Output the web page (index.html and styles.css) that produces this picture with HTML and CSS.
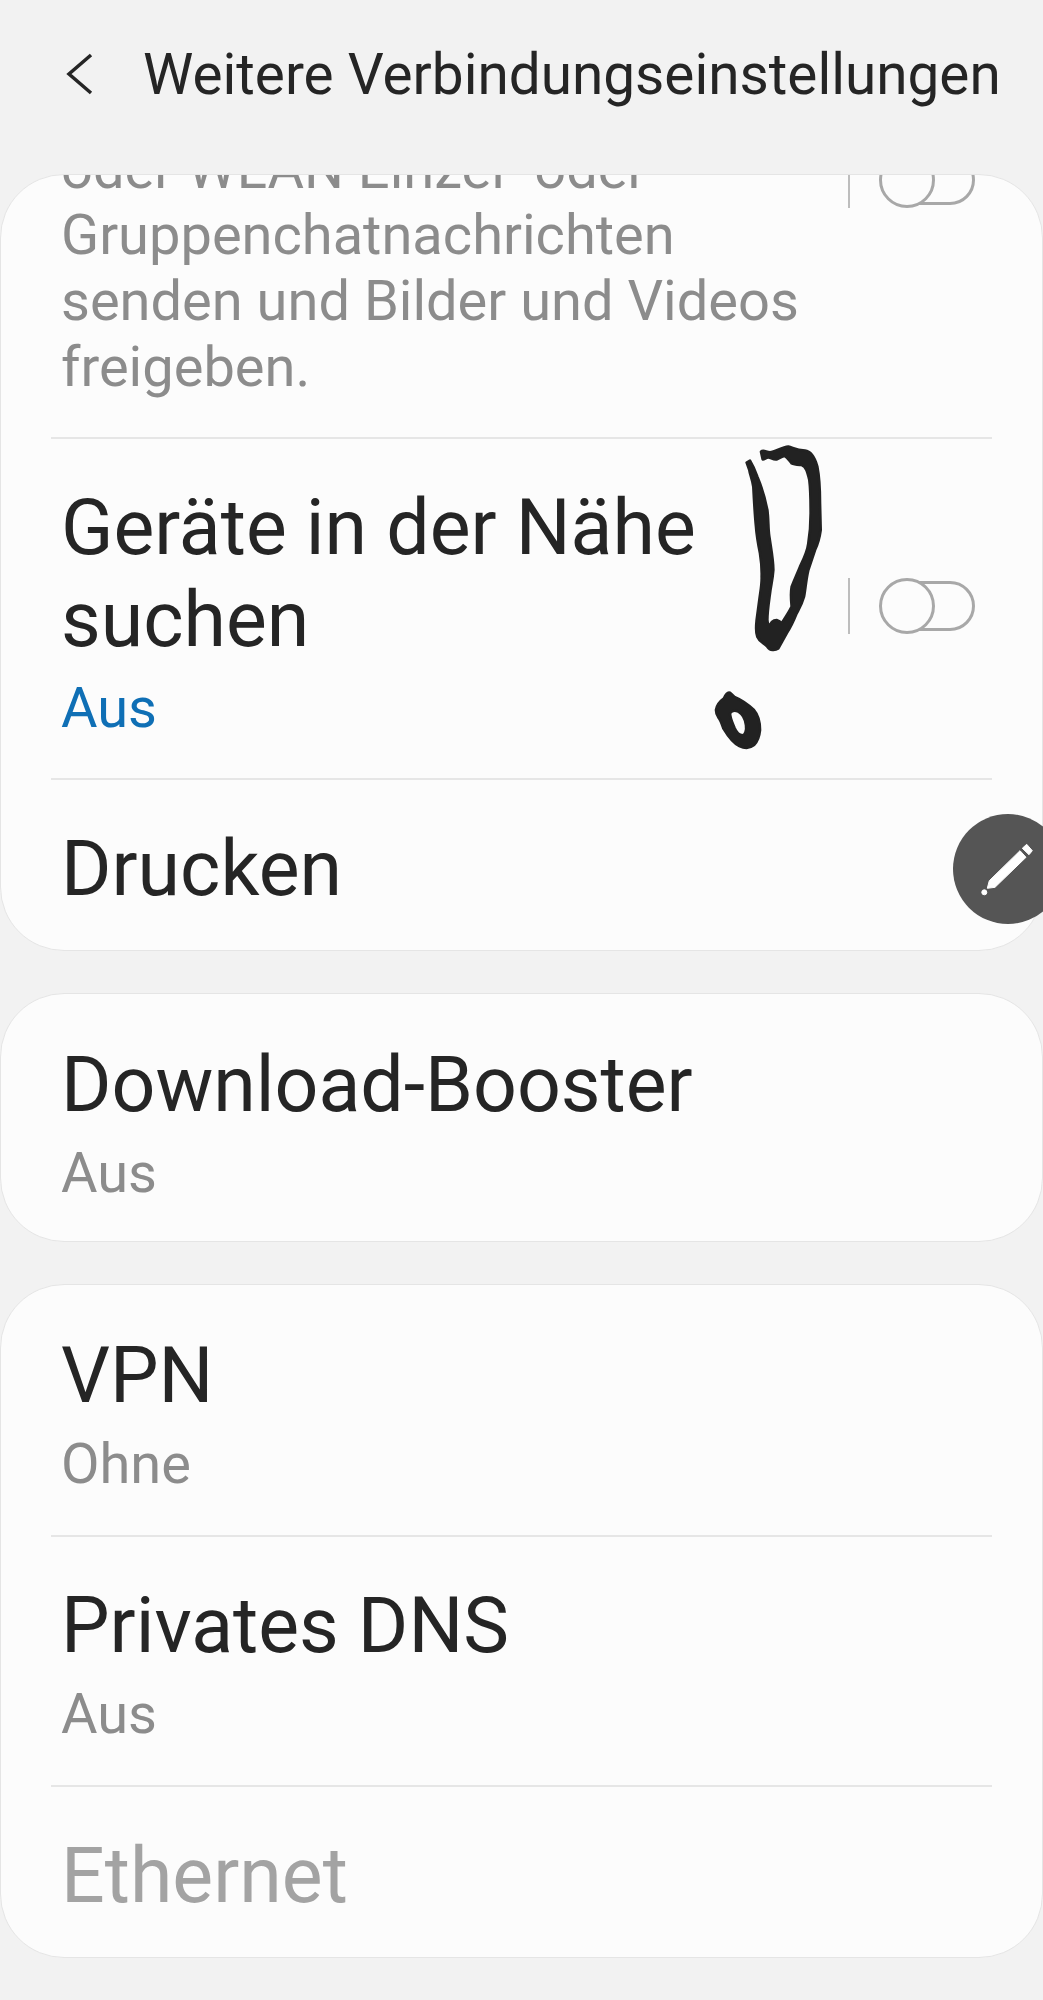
FILE: index.html
```html
<!DOCTYPE html>
<html lang="de">
<head>
  <meta charset="UTF-8" />
  <meta name="viewport" content="width=device-width, initial-scale=1.0"/>
  <title>Weitere Verbindungseinstellungen</title>
  <link rel="stylesheet" href="styles.css">
</head>
<body>
  <header class="topbar">
    <svg class="back" viewBox="0 0 30 42" aria-hidden="true"><path d="M26 2 L4 21 L26 40"/></svg>
    <h1>Weitere Verbindungseinstellungen</h1>
  </header>

  <main class="list">
    <section class="card">
      <div class="row row-cut">
        <p class="sub">oder WLAN Einzel- oder<br>Gruppenchatnachrichten<br>senden und Bilder und Videos<br>freigeben.</p>
        <div class="switch"><span class="track"></span><span class="thumb"></span></div>
      </div>
      <div class="row row-toggle">
        <div class="text">
          <h2>Geräte in der Nähe<br>suchen</h2>
          <p class="sub blue">Aus</p>
        </div>
        <div class="switch"><span class="track"></span><span class="thumb"></span></div>
      </div>
      <div class="row row-single">
        <div class="text">
          <h2>Drucken</h2>
        </div>
      </div>
    </section>

    <section class="card">
      <div class="row">
        <div class="text">
          <h2>Download-Booster</h2>
          <p class="sub">Aus</p>
        </div>
      </div>
    </section>

    <section class="card">
      <div class="row">
        <div class="text">
          <h2>VPN</h2>
          <p class="sub">Ohne</p>
        </div>
      </div>
      <div class="row">
        <div class="text">
          <h2>Privates DNS</h2>
          <p class="sub">Aus</p>
        </div>
      </div>
      <div class="row row-single">
        <div class="text">
          <h2 class="off">Ethernet</h2>
        </div>
      </div>
    </section>
  </main>

  <!-- handwritten exclamation mark on top of the screenshot -->
  <svg class="ink" viewBox="0 0 1089 1020" aria-hidden="true">
    <path d="M243 95 C250 88 258 96 270 97 C285 96 305 82 325 80 C338 82 345 90 375 92 C395 94 405 115 412 140 C418 170 420 200 420 250 L422 330 C418 360 412 375 405 390 C395 420 390 435 385 450 C378 480 376 510 372 530 C365 555 358 565 350 580 C340 605 330 625 320 640 L295 685 C285 692 270 692 262 680 C250 668 238 665 232 650 C226 635 228 620 230 600 L238 540 C242 510 246 490 245 470 C246 440 244 425 240 400 C234 370 230 350 228 320 C224 280 222 240 220 200 C216 175 210 165 208 150 L200 128 L210 122 C218 135 225 150 232 170 C245 200 255 235 262 270 C266 300 264 325 268 350 C274 390 280 420 280 450 C278 480 272 500 270 520 C266 550 262 575 262 600 L265 625 C270 610 278 600 290 600 C298 602 302 606 305 610 C318 590 328 575 335 560 C332 530 332 515 335 500 C345 475 352 460 360 440 C372 415 382 395 385 370 C390 340 392 310 392 280 C392 240 392 210 388 180 C382 155 378 140 365 135 C350 134 342 134 335 130 C328 122 322 112 315 108 C305 108 298 116 290 118 C280 120 272 112 265 112 C258 112 252 120 248 118 Z"/>
    <path fill-rule="evenodd" d="M108 870 C110 855 118 845 132 835 C136 825 142 815 150 818 C155 822 158 828 165 832 C185 840 205 855 222 870 C235 885 240 905 240 930 C238 950 232 965 222 975 C210 985 195 986 178 978 C160 970 145 950 130 925 C125 910 122 900 115 892 C110 885 108 878 108 870 Z M150 880 C155 872 165 870 175 875 C188 882 195 895 198 915 C200 930 196 945 188 946 C178 946 170 938 164 925 C158 910 150 895 150 880 Z"/>
  </svg>

  <div class="fab">
    <svg viewBox="0 0 110 110" aria-hidden="true">
      <path d="M73.7 30.3 L79.3 36.7 L76 40.7 L69.3 34.3 Z"/>
      <path d="M67 36.7 L73 43.3 L42 73.3 L34.3 74.3 L36.3 66.7 Z"/>
      <circle cx="31.3" cy="78.3" r="2.5"/>
    </svg>
  </div>
</body>
</html>
```

FILE: styles.css
```css
html, body {
  height: 2000px;
}
body {
  font-family: Roboto, sans-serif;
  background-color: #f2f2f2;
  color: #252525;
  margin: 0;
  overflow: hidden;
  position: relative;
}
.topbar {
  height: 174px;
  display: flex;
  align-items: center;
  padding-left: 65px;
  padding-bottom: 26px;
  box-sizing: border-box;
}
.back {
  width: 30px;
  height: 42px;
  margin-right: 48px;
}
.back path {
  fill: none;
  stroke: #252525;
  stroke-width: 3.5;
}
h1 {
  margin: 0;
  font-size: 56.7px;
  font-weight: 400;
  white-space: nowrap;
}
.list {
  display: flex;
  flex-direction: column;
  gap: 42px;
}
.card {
  background-color: #fcfcfc;
  border: 1px solid #e5e5e5;
  border-radius: 64px;
  overflow: hidden;
}
.row {
  display: flex;
  align-items: center;
  justify-content: space-between;
  margin: 0 50px;
  padding: 43px 0 38px;
  border-top: 2px solid #e6e6e6;
}
.row:first-child {
  border-top: none;
  padding-top: 45px;
}
.row:only-child {
  padding-bottom: 35px;
}
.row-toggle {
  padding-bottom: 37px;
}
.row-toggle .switch {
  margin-bottom: 12px;
}
.row-single {
  padding-bottom: 35px;
}
.row-cut,
.row-cut:first-child {
  height: 514px;
  box-sizing: border-box;
  margin-top: -252px;
  padding: 0;
}
.row-cut .sub {
  align-self: flex-end;
  margin: 0 0 37px;
  padding-left: 10px;
}
.text {
  padding-left: 10px;
}
h2 {
  margin: 0;
  font-size: 77px;
  line-height: 92px;
  font-weight: 400;
}
h2.off {
  color: #a3a3a3;
}
.sub {
  margin: 9px 0 0;
  font-size: 56px;
  line-height: 66px;
  color: #8c8c8c;
}
.sub.blue {
  color: #0f6fb5;
}
.switch {
  width: 125px;
  height: 56px;
  flex: none;
  position: relative;
  border-left: 2px solid #bdbdbd;
  margin-right: 17px;
}
.track {
  position: absolute;
  left: 32px;
  right: 0;
  top: 3px;
  height: 50px;
  box-sizing: border-box;
  border: 3px solid #a8a8a8;
  border-radius: 25px;
}
.thumb {
  position: absolute;
  left: 29px;
  top: 0;
  width: 56px;
  height: 56px;
  box-sizing: border-box;
  border: 3px solid #a8a8a8;
  border-radius: 50%;
  background-color: #fcfcfc;
}
.ink {
  position: absolute;
  left: 680px;
  top: 420px;
  width: 363px;
  height: 340px;
  fill: #222;
  stroke: #222;
  stroke-width: 8;
  stroke-linejoin: round;
}
.fab {
  position: absolute;
  left: 953px;
  top: 814px;
  width: 110px;
  height: 110px;
  border-radius: 50%;
  background-color: #555;
}
.fab svg {
  display: block;
  width: 110px;
  height: 110px;
  fill: #fff;
  stroke: #fff;
  stroke-width: 1;
  stroke-linejoin: round;
}
```
